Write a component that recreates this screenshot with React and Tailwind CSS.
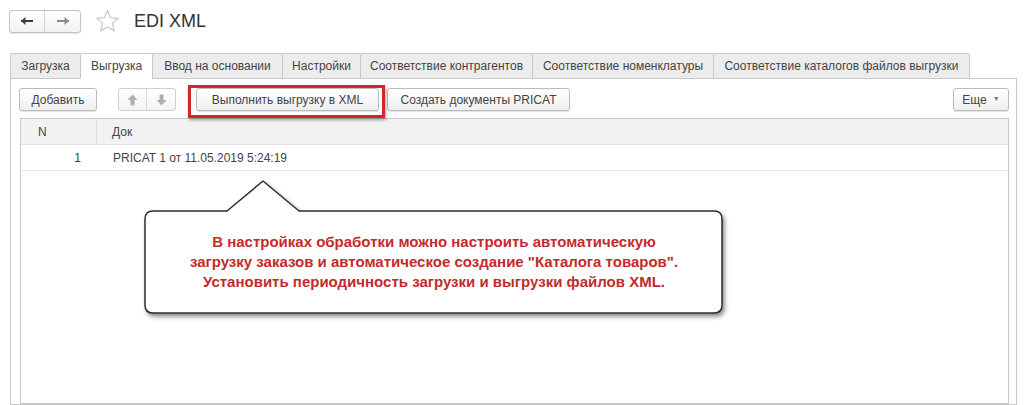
import React from 'react';

const TABS = [
  { label: 'Загрузка', w: 'w-[71px]' },
  { label: 'Выгрузка', w: 'w-[73px]', active: true },
  { label: 'Ввод на основании', w: 'w-[131px]' },
  { label: 'Настройки', w: 'w-[79px]' },
  { label: 'Соответствие контрагентов', w: 'w-[173px]' },
  { label: 'Соответствие номенклатуры', w: 'w-[182px]' },
  { label: 'Соответствие каталогов файлов выгрузки', w: 'w-[257px]' },
];

const btn =
  'h-[23px] flex items-center justify-center rounded-[3px] border border-[#bcbcbc] bg-gradient-to-b from-white to-[#efefef] shadow-[0_1px_1px_rgba(0,0,0,0.12)] text-[12px] text-[#444]';

function ArrowLeft({ color }) {
  return (
    <svg width="14" height="10" viewBox="0 0 14 10">
      <path d="M1 5 L13 5" stroke={color} strokeWidth="2" />
      <path d="M1 5 L5.5 1 L5.5 9 Z" fill={color} />
    </svg>
  );
}

function ArrowRight({ color }) {
  return (
    <svg width="14" height="10" viewBox="0 0 14 10">
      <path d="M1 5 L13 5" stroke={color} strokeWidth="2" />
      <path d="M13 5 L8.5 1 L8.5 9 Z" fill={color} />
    </svg>
  );
}

function ThickArrow({ down }) {
  return (
    <svg width="11" height="12" viewBox="0 0 11 12" className={down ? 'rotate-180' : ''}>
      <path d="M5.5 0.5 L10.5 6 L7.5 6 L7.5 11.5 L3.5 11.5 L3.5 6 L0.5 6 Z" fill="#a9b1b8" />
    </svg>
  );
}

export default function App() {
  return (
    <div className="relative w-[1024px] h-[405px] overflow-hidden bg-white flex flex-col font-['Liberation_Sans',Arial,sans-serif] text-[#444]">
      {/* title bar */}
      <div className="flex items-center pt-[9px] pl-[9px]">
        <div className="flex h-[23px] rounded-[3px] border border-[#c4c4c4] bg-gradient-to-b from-white to-[#f1f1f1] shadow-[0_1px_1px_rgba(0,0,0,0.1)]">
          <div className="w-[35px] flex items-center justify-center border-r border-[#d4d4d4]">
            <ArrowLeft color="#3c3c3c" />
          </div>
          <div className="w-[35px] flex items-center justify-center">
            <ArrowRight color="#8a8a8a" />
          </div>
        </div>
        <svg width="25" height="24" viewBox="0 0 24 23" className="ml-[14px]">
          <path
            d="M12 1.5 L14.9 8.3 L22.3 8.9 L16.7 13.8 L18.4 21 L12 17.2 L5.6 21 L7.3 13.8 L1.7 8.9 L9.1 8.3 Z"
            fill="none"
            stroke="#c9c9c9"
            strokeWidth="1.2"
            strokeLinejoin="round"
          />
        </svg>
        <span className="ml-[14px] text-[18px] text-[#333] leading-none">EDI XML</span>
      </div>

      {/* tabs */}
      <div className="flex mt-[20px] ml-[10px] relative z-10">
        {TABS.map((t, i) => (
          <div
            key={t.label}
            className={`${t.w} h-[26px] flex items-center justify-center text-[12px] text-[#444] border border-[#c9c9c9] rounded-t-[2px] ${i > 0 ? '-ml-px' : ''} ${
              t.active ? 'bg-white border-b-white' : 'bg-[#ececec]'
            }`}
          >
            {t.label}
          </div>
        ))}
      </div>

      {/* panel */}
      <div className="-mt-px ml-[10px] w-[1007px] flex-1 border border-[#c9c9c9] flex flex-col pt-[9px] pl-[8px] pr-[7px]">
        <div className="flex items-center">
          <div className={`${btn} w-[78px]`}>Добавить</div>
          <div className="ml-[21px] flex h-[23px] rounded-[3px] border border-[#cfcfcf] bg-gradient-to-b from-white to-[#f3f3f3]">
            <div className="w-[28px] flex items-center justify-center border-r border-[#dadada]">
              <ThickArrow />
            </div>
            <div className="w-[28px] flex items-center justify-center">
              <ThickArrow down />
            </div>
          </div>
          <div className="relative ml-[20px]">
            <div className={`${btn} w-[183px]`}>Выполнить выгрузку в XML</div>
            <div className="absolute -left-[8px] -right-[6px] -top-[3px] -bottom-[7px] border-[3px] border-[#d0282a] shadow-[1px_2px_3px_rgba(0,0,0,0.35)]" />
          </div>
          <div className={`${btn} w-[183px] ml-[8px]`}>Создать документы PRICAT</div>
          <div className={`${btn} w-[56px] ml-auto gap-[6px]`}>
            <span>Еще</span>
            <span className="text-[7px] text-[#777]">▼</span>
          </div>
        </div>

        {/* table */}
        <div className="mt-[7px] ml-px flex-1 border border-[#c9c9c9] flex flex-col text-[12px] text-[#444]">
          <div className="flex h-[26px] bg-[#f2f2f2] border-b border-[#dedede]">
            <div className="w-[76px] flex items-center pl-[17px] border-r border-[#dcdcdc]">N</div>
            <div className="flex-1 flex items-center pl-[15px]">Док</div>
          </div>
          <div className="flex h-[26px] border-b border-[#e8e8e8]">
            <div className="w-[76px] flex items-center justify-end pr-[16px]">1</div>
            <div className="flex-1 flex items-center pl-[16px]">PRICAT 1 от 11.05.2019 5:24:19</div>
          </div>
        </div>
      </div>

      {/* callout */}
      <svg
        width="594"
        height="150"
        viewBox="0 0 594 150"
        className="absolute left-[138px] top-[176px] drop-shadow-[2px_3px_2px_rgba(0,0,0,0.45)]"
      >
        <path
          d="M15 35 L89 35 L125 5 L161 35 L576 35 Q584 35 584 43 L584 129 Q584 137 576 137 L15 137 Q7 137 7 129 L7 43 Q7 35 15 35 Z"
          fill="white"
          stroke="#2e2e2e"
          strokeWidth="1.5"
          strokeLinejoin="round"
        />
      </svg>
      <div className="absolute left-[145px] top-[232px] w-[578px] text-center text-[15px] font-bold leading-[20px] text-[#c42a2c]">
        В настройках обработки можно настроить автоматическую
        <br />
        загрузку заказов и автоматическое создание "Каталога товаров".
        <br />
        Установить периодичность загрузки и выгрузки файлов XML.
      </div>
    </div>
  );
}
